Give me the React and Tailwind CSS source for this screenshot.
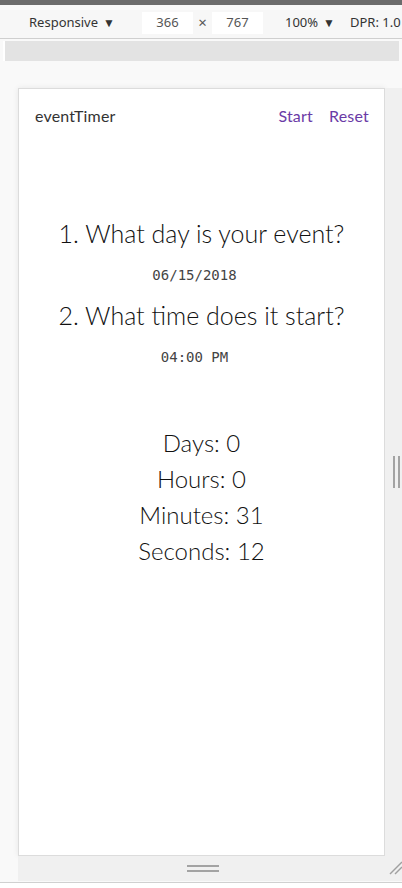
const countdown = [
  { label: 'Days', value: 0 },
  { label: 'Hours', value: 0 },
  { label: 'Minutes', value: 31 },
  { label: 'Seconds', value: 12 },
];

function Toolbar() {
  return (
    <div className="h-[34px] pt-[2px] bg-[#f7f7f7] border-b border-[#cfcfcf] flex items-center text-[13px] font-normal text-[#333] [font-family:'Noto_Sans',sans-serif]">
      <span className="ml-[29px]">Responsive</span>
      <span className="ml-[5px] text-[12px]">▼</span>
      <span className="ml-[27px] w-[51px] h-[22px] bg-white flex items-center justify-center text-[#555]">366</span>
      <span className="w-[19px] text-center text-[15px] text-[#555]">×</span>
      <span className="w-[51px] h-[22px] bg-white flex items-center justify-center text-[#555]">767</span>
      <span className="ml-[22px]">100%</span>
      <span className="ml-[5px] text-[12px]">▼</span>
      <span className="ml-[15px] whitespace-nowrap">DPR: 1.0</span>
    </div>
  );
}

function Frame() {
  return (
    <div className="w-[367px] h-[768px] bg-white border border-[#dcdcdc] shadow-[0_0_6px_rgba(0,0,0,0.08)] flex flex-col font-normal [font-family:Lato,'Open_Sans',sans-serif]">
      <header className="flex items-center justify-between pl-4 pr-[15px] pt-[17px] text-[16px] leading-5 font-normal tracking-[0.2px]">
        <span className="text-[#333]">eventTimer</span>
        <nav className="flex gap-4 text-[#6a3aa6]">
          <span>Start</span>
          <span>Reset</span>
        </nav>
      </header>
      <section className="flex flex-col items-center text-[#111]">
        <h2 className="mt-[91px] text-[25px] leading-8 font-light">1. What day is your event?</h2>
        <p className="mt-[16px] mr-[14px] text-[14px] leading-5 font-normal text-[#444] [font-family:'DejaVu_Sans_Mono',monospace]">06/15/2018</p>
        <h2 className="mt-[14px] text-[25px] leading-8 font-light">2. What time does it start?</h2>
        <p className="mt-[16px] mr-[14px] text-[14px] leading-5 font-normal text-[#444] [font-family:'DejaVu_Sans_Mono',monospace]">04:00 PM</p>
        <div className="mt-[58px] flex flex-col items-center text-[24px] leading-[36px] font-light">
          {countdown.map(({ label, value }) => (
            <div key={label}>{label}: {value}</div>
          ))}
        </div>
      </section>
    </div>
  );
}

export default function App() {
  return (
    <div className="w-[402px] h-[888px] bg-[#f9f9f9] flex flex-col overflow-hidden">
      <div className="h-[5px] bg-[#6b6b6b]" />
      <Toolbar />
      <div className="mt-[2px] h-[20px] flex">
        <div className="w-[3px]" />
        <div className="w-[2px] bg-white" />
        <div className="w-[394px] bg-[#e3e3e3]" />
      </div>
      <div className="mt-[27px] flex">
        <div className="w-[18px]" />
        <Frame />
        <div className="w-[17px] bg-[#f0f0f0] flex items-center">
          <div className="ml-[8px] flex gap-[3px]">
            <div className="w-[2px] h-[32px] bg-[#a3a3a3]" />
            <div className="w-[2px] h-[32px] bg-[#a3a3a3]" />
          </div>
        </div>
      </div>
      <div className="flex">
        <div className="w-[18px]" />
        <div className="flex-1 h-[25px] bg-[#f0f0f0] flex items-start">
          <div className="ml-[169px] mt-[9px] flex flex-col gap-[3px]">
            <div className="w-[32px] h-[2px] bg-[#a3a3a3]" />
            <div className="w-[32px] h-[2px] bg-[#a3a3a3]" />
          </div>
          <svg className="ml-auto mt-[3px]" width="14" height="16" viewBox="0 0 14 16">
            <line x1="2" y1="15" x2="14" y2="3" stroke="#a0a0a0" strokeWidth="1.5" />
            <line x1="7" y1="15" x2="14" y2="8" stroke="#a0a0a0" strokeWidth="1.5" />
          </svg>
        </div>
      </div>
      <div className="border-t border-[#d0d0d0] flex-1 bg-white mt-[1px]" />
    </div>
  );
}
